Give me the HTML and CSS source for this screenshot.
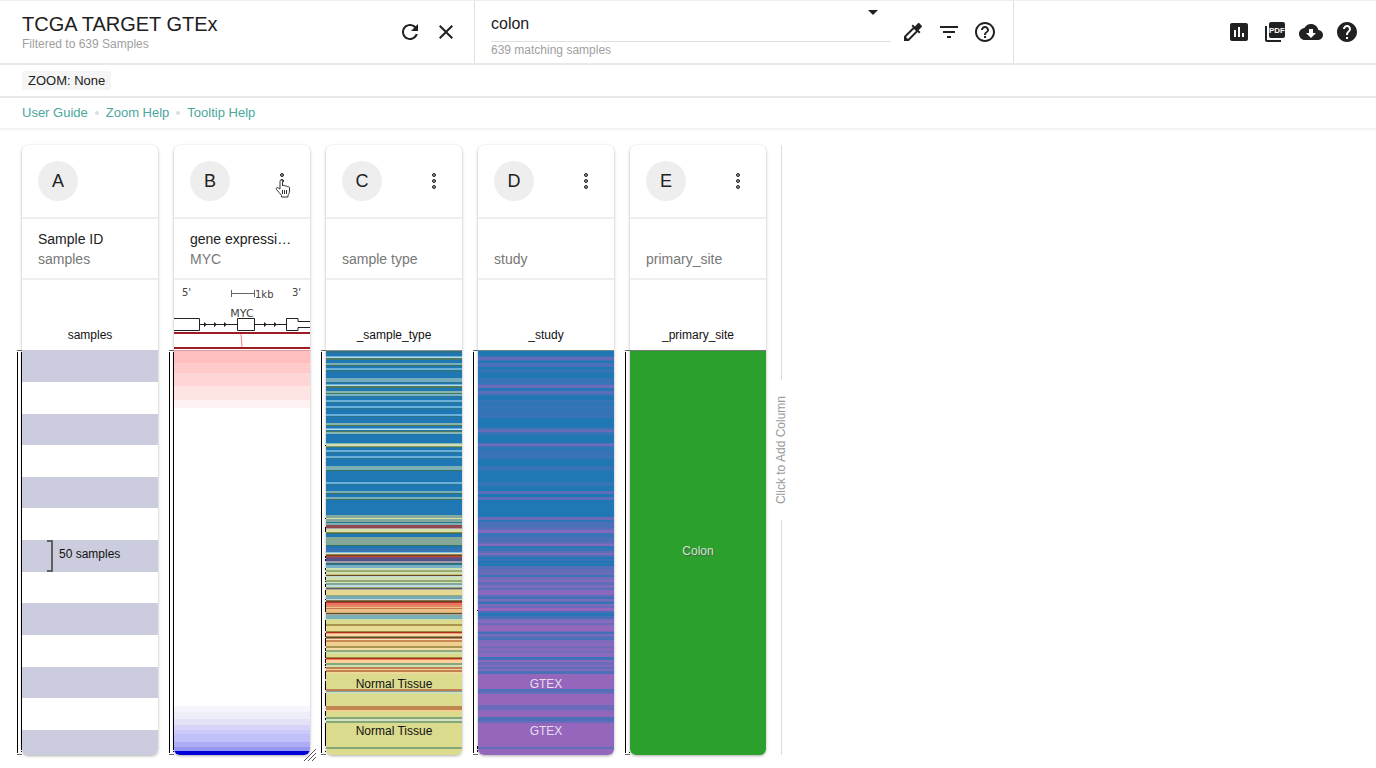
FILE: index.html
```html
<!DOCTYPE html>
<html lang="en">
<head>
<meta charset="utf-8">
<meta name="viewport" content="width=device-width, initial-scale=1">
<title>TCGA TARGET GTEx</title>
<link rel="stylesheet" href="styles.css">
</head>
<body>
<header class="topbar">
  <section class="cohort">
    <div class="cohort-text">
      <h1 class="cohort-name">TCGA TARGET GTEx</h1>
      <p class="caption">Filtered to 639 Samples</p>
    </div>
    <button class="icon-btn" aria-label="Reload cohort"><svg class="icon" viewBox="0 0 24 24"><path d="M17.65 6.35C16.2 4.9 14.21 4 12 4c-4.42 0-7.99 3.58-7.99 8s3.57 8 7.99 8c3.73 0 6.84-2.55 7.73-6h-2.08c-.82 2.33-3.04 4-5.65 4-3.31 0-6-2.69-6-6s2.69-6 6-6c1.66 0 3.14.69 4.22 1.78L13 11h7V4l-2.35 2.35z"/></svg></button>
    <button class="icon-btn" aria-label="Close cohort"><svg class="icon" viewBox="0 0 24 24"><path d="M19 6.41L17.59 5 12 10.59 6.41 5 5 6.41 10.59 12 5 17.59 6.41 19 12 13.41 17.59 19 19 17.59 13.41 12z"/></svg></button>
  </section>
  <section class="search">
    <div class="search-field">
      <input class="search-input" type="text" value="colon" aria-label="Find samples" aria-describedby="matches">
      <button class="search-history" aria-label="Search history"><svg class="caret" viewBox="0 0 10 5"><path d="M0 0h10L5 5z"/></svg></button>
      <p class="caption" id="matches">639 matching samples</p>
    </div>
    <button class="icon-btn" aria-label="Pick samples"><svg class="icon" viewBox="0 0 24 24"><path d="M20.71 5.63l-2.34-2.34c-.39-.39-1.02-.39-1.41 0l-3.12 3.12-1.93-1.91-1.41 1.41 1.42 1.42L3 16.25V21h4.75l8.92-8.92 1.42 1.42 1.41-1.41-1.92-1.92 3.12-3.12c.4-.4.4-1.03.01-1.42zM6.92 19L5 17.08l8.06-8.06 1.92 1.92L6.92 19z"/></svg></button>
    <button class="icon-btn" aria-label="Filter"><svg class="icon" viewBox="0 0 24 24"><path d="M10 18h4v-2h-4v2zM3 6v2h18V6H3zm3 7h12v-2H6v2z"/></svg></button>
    <button class="icon-btn" aria-label="Search help"><svg class="icon" viewBox="0 0 24 24"><path d="M11 18h2v-2h-2v2zm1-16C6.48 2 2 6.48 2 12s4.48 10 10 10 10-4.48 10-10S17.52 2 12 2zm0 18c-4.41 0-8-3.59-8-8s3.59-8 8-8 8 3.59 8 8-3.59 8-8 8zm0-14c-2.21 0-4 1.79-4 4h2c0-1.1.9-2 2-2s2 .9 2 2c0 2-3 1.75-3 5h2c0-2.25 3-2.5 3-5 0-2.21-1.79-4-4-4z"/></svg></button>
  </section>
  <nav class="tools" aria-label="Tools">
    <button class="icon-btn" aria-label="Charts"><svg class="icon" viewBox="0 0 24 24"><path d="M19 3H5c-1.1 0-2 .9-2 2v14c0 1.1.9 2 2 2h14c1.1 0 2-.9 2-2V5c0-1.1-.9-2-2-2zM9 17H7v-7h2v7zm4 0h-2V7h2v10zm4 0h-2v-4h2v4z"/></svg></button>
    <button class="icon-btn" aria-label="Download PDF"><svg class="icon" viewBox="0 0 24 24"><path d="M4 6H2v14c0 1.1.9 2 2 2h14v-2H4z"/><rect x="6" y="2" width="16" height="16" rx="2"/><text class="icon-label" x="14" y="13" text-anchor="middle">PDF</text></svg></button>
    <button class="icon-btn" aria-label="Download data"><svg class="icon" viewBox="0 0 24 24"><path d="M19.35 10.04C18.67 6.59 15.64 4 12 4 9.11 4 6.6 5.64 5.35 8.04 2.34 8.36 0 10.91 0 14c0 3.31 2.69 6 6 6h13c2.76 0 5-2.24 5-5 0-2.64-2.05-4.78-4.65-4.96zM17 13l-5 5-5-5h3V9h4v4h3z"/></svg></button>
    <button class="icon-btn" aria-label="Help"><svg class="icon" viewBox="0 0 24 24"><path d="M12 2C6.48 2 2 6.48 2 12s4.48 10 10 10 10-4.48 10-10S17.52 2 12 2zm1 17h-2v-2h2v2zm2.07-7.75l-.9.92C13.45 12.9 13 13.5 13 15h-2v-.5c0-1.1.45-2.1 1.17-2.83l1.24-1.26c.37-.36.59-.86.59-1.41 0-1.1-.9-2-2-2s-2 .9-2 2H8c0-2.21 1.79-4 4-4s4 1.79 4 4c0 .88-.36 1.68-.93 2.25z"/></svg></button>
  </nav>
</header>

<div class="zoombar"><span class="chip">ZOOM: None</span></div>

<nav class="links" aria-label="Guides">
  <a class="link" href="#guide">User Guide</a><span class="dot"></span>
  <a class="link" href="#zoom">Zoom Help</a><span class="dot"></span>
  <a class="link" href="#tooltip">Tooltip Help</a>
</nav>

<main class="columns">
  <article class="column">
    <div class="card-head"><span class="badge">A</span></div>
    <div class="card-title"><h2 class="name">Sample ID</h2><p class="sub">samples</p></div>
    <div class="annotation"><span class="field">samples</span></div>
    <div class="plot">
      <svg class="axis" viewBox="0 0 6 405" preserveAspectRatio="none" data-axis="full"></svg>
      <svg class="heat" viewBox="0 0 136 405" preserveAspectRatio="none" data-heat="samples"></svg>
      <span class="scale">50 samples</span>
    </div>
  </article>

  <article class="column">
    <div class="card-head"><span class="badge">B</span>
      <button class="menu" aria-label="Column B menu"><svg class="menu-icon" viewBox="0 0 24 24"><circle cx="12" cy="6" r="2"/><circle cx="12" cy="12" r="2"/><circle cx="12" cy="18" r="2"/></svg></button>
      <svg class="pointer" viewBox="0 0 16 20"><path d="M5 11V3.500c0-2 2.500-2 2.500 0V8c.5-1 2.200-1 2.500.3.700-.8 2-.6 2.300.5 1-.6 2.200 0 2.200 1.200V13c0 2-1 3-1.500 4.500V19H6.500v-1.500C5 16 3.500 13.500 1.500 11.500c-1-1.300.5-2.500 1.700-1.500z"/><path d="M7.500 12v4M9.500 12v4M11.500 12v4"/></svg>
    </div>
    <div class="card-title"><h2 class="name">gene expressi…</h2><p class="sub">MYC</p></div>
    <div class="annotation gene-model">
      <svg class="gene" viewBox="0 0 136 70" preserveAspectRatio="none">
        <g class="gene-text"><text x="8" y="16">5'</text><text x="81" y="18">1kb</text><text x="118" y="16">3'</text><text class="gene-name" x="68" y="37" text-anchor="middle">MYC</text></g>
        <path class="gene-scale" d="M57.500 10v7M57.500 13.500h23M80.500 10v7"/>
        <path class="gene-line" d="M0 38.500h25.500v12H0M25.500 44.500h38M63.500 38.500h17v12h-17zM80.500 44.500h32M136 41.500h-12v-3h-11.500v12H124v-3h12"/>
        <path class="gene-arrows" d="M30 42l3 2.500-3 2.500zM40 42l3 2.500-3 2.500zM50 42l3 2.500-3 2.500zM90 42l3 2.500-3 2.500zM100 42l3 2.500-3 2.500z"/>
        <path class="gene-range" d="M0 53h136M0 68h136"/>
        <path class="gene-link" d="M67 54l1 13"/>
      </svg>
    </div>
    <div class="plot">
      <svg class="axis" viewBox="0 0 6 405" preserveAspectRatio="none" data-axis="full"></svg>
      <svg class="heat" viewBox="0 0 136 405" preserveAspectRatio="none" data-heat="expression"></svg>
    </div>
    <svg class="resize" viewBox="0 0 12 12"><path d="M0 12L12 0M4 12l8-8M8 12l4-4"/></svg>
  </article>

  <article class="column">
    <div class="card-head"><span class="badge">C</span>
      <button class="menu" aria-label="Column C menu"><svg class="menu-icon" viewBox="0 0 24 24"><circle cx="12" cy="6" r="2"/><circle cx="12" cy="12" r="2"/><circle cx="12" cy="18" r="2"/></svg></button>
    </div>
    <div class="card-title"><p class="sub">sample type</p></div>
    <div class="annotation"><span class="field">_sample_type</span></div>
    <div class="plot">
      <svg class="axis" viewBox="0 0 6 405" preserveAspectRatio="none" data-axis="type"></svg>
      <svg class="heat" viewBox="0 0 136 405" preserveAspectRatio="none" data-heat="type"></svg>
      <span class="value upper dark">Normal Tissue</span>
      <span class="value lower dark">Normal Tissue</span>
    </div>
  </article>

  <article class="column">
    <div class="card-head"><span class="badge">D</span>
      <button class="menu" aria-label="Column D menu"><svg class="menu-icon" viewBox="0 0 24 24"><circle cx="12" cy="6" r="2"/><circle cx="12" cy="12" r="2"/><circle cx="12" cy="18" r="2"/></svg></button>
    </div>
    <div class="card-title"><p class="sub">study</p></div>
    <div class="annotation"><span class="field">_study</span></div>
    <div class="plot">
      <svg class="axis" viewBox="0 0 6 405" preserveAspectRatio="none" data-axis="study"></svg>
      <svg class="heat" viewBox="0 0 136 405" preserveAspectRatio="none" data-heat="study"></svg>
      <span class="value upper">GTEX</span>
      <span class="value lower">GTEX</span>
    </div>
  </article>

  <article class="column">
    <div class="card-head"><span class="badge">E</span>
      <button class="menu" aria-label="Column E menu"><svg class="menu-icon" viewBox="0 0 24 24"><circle cx="12" cy="6" r="2"/><circle cx="12" cy="12" r="2"/><circle cx="12" cy="18" r="2"/></svg></button>
    </div>
    <div class="card-title"><p class="sub">primary_site</p></div>
    <div class="annotation"><span class="field">_primary_site</span></div>
    <div class="plot">
      <svg class="axis" viewBox="0 0 6 405" preserveAspectRatio="none" data-axis="site"></svg>
      <svg class="heat" viewBox="0 0 136 405" preserveAspectRatio="none" data-heat="site"></svg>
      <span class="value middle">Colon</span>
    </div>
  </article>

  <button class="add-column"><span class="add-label">Click to Add Column</span></button>
</main>
<script src="heatmaps.js"></script>
</body>
</html>
```

FILE: styles.css
```css
*, *::before, *::after { box-sizing: border-box; }
body {
  margin: 0;
  min-height: 100vh;
  display: flex;
  flex-direction: column;
  background: #fff;
  color: #212121;
  font: 14px/20px "Liberation Sans", Arial, sans-serif;
}
h1, h2, p { margin: 0; font-weight: 400; }
button { margin: 0; padding: 0; border: 0; background: none; color: inherit; font: inherit; cursor: pointer; }

.topbar {
  display: grid;
  grid-template-columns: 475px 539px 1fr;
  min-height: 65px;
  border-top: 1px solid #eee;
  border-bottom: 2px solid #e9e9e9;
}
.cohort, .search, .tools { display: flex; align-items: center; padding-right: 10px; }
.cohort, .search { border-right: 1px solid #e0e0e0; }
.cohort { padding-left: 22px; }
.search { padding-left: 16px; }
.tools { justify-content: flex-end; padding-right: 11px; }
.cohort-text { flex: 1; min-width: 0; }
.cohort-name { font-size: 20px; line-height: 24px; }
.caption { font-size: 12px; line-height: 16px; color: #a0a0a0; }
.icon-btn { width: 36px; height: 36px; flex: none; display: grid; place-items: center; }
.icon { width: 24px; height: 24px; fill: #212121; }
.icon-label { fill: #fff; font: bold 8px "Liberation Sans", Arial, sans-serif; }
.search-field { position: relative; flex: 1; margin-right: 4px; padding-top: 4px; }
.search-input {
  display: block;
  width: 100%;
  height: 32px;
  padding: 0 24px 3px 0;
  border: 0;
  border-bottom: 1px solid #e0e0e0;
  outline: 0;
  background: none;
  color: #212121;
  font: 16px/24px "Liberation Sans", Arial, sans-serif;
}
.search-history { position: absolute; top: 0; right: 12px; width: 12px; height: 12px; display: grid; place-items: center; }
.caret { width: 10px; height: 5px; fill: #212121; }

.zoombar { display: flex; align-items: center; min-height: 33px; padding: 0 22px; border-bottom: 2px solid #e9e9e9; }
.chip { padding: 0 6px; border-radius: 2px; background: #f5f5f5; font-size: 13px; line-height: 19px; }

.links { display: flex; align-items: center; gap: 7px; min-height: 32px; padding: 0 22px; border-bottom: 2px solid #f3f3f3; font-size: 13px; }
.link { color: #4ba69c; text-decoration: none; }
.dot { width: 4px; height: 4px; border-radius: 50%; background: #ddd; }

.columns { flex: 1; display: flex; gap: 16px; padding: 15px 22px 13px; }
.column {
  position: relative;
  flex: none;
  width: 136px;
  display: flex;
  flex-direction: column;
  border-radius: 6px;
  background: #fff;
  box-shadow: 0 1px 3px rgba(0, 0, 0, 0.32);
}
.card-head { position: relative; display: flex; align-items: center; justify-content: space-between; height: 74px; padding: 0 16px; border-bottom: 2px solid #eee; }
.badge { width: 40px; height: 40px; border-radius: 50%; background: #eee; font-size: 18px; line-height: 40px; text-align: center; }
.menu { width: 24px; height: 24px; }
.menu-icon { display: block; width: 24px; height: 24px; fill: #999; stroke: #222; stroke-width: 1; }
.menu-icon circle { r: 1.5px; }
.pointer { position: absolute; left: 101px; top: 33px; width: 16px; height: 20px; fill: #fff; stroke: #333; stroke-width: 1; }
.card-title { display: flex; flex-direction: column; justify-content: flex-end; height: 61px; padding: 0 16px 9px; border-bottom: 2px solid #eee; }
.name { font-size: 14px; line-height: 20px; white-space: nowrap; }
.sub { color: #777; }
.annotation { display: flex; align-items: flex-end; justify-content: center; height: 70px; padding-bottom: 7px; }
.field { font-size: 12px; line-height: 16px; color: #111; }
.gene-model { padding: 0; }
.gene { width: 100%; height: 70px; fill: none; }
.gene-text { fill: #444; font: 10px "DejaVu Sans", sans-serif; }
.gene-name { font-size: 11px; }
.gene-scale { stroke: #666; }
.gene-line { stroke: #222; }
.gene-arrows { fill: #222; }
.gene-range { stroke: #a01c24; stroke-width: 2; }
.gene-link { stroke: #f08080; }
.plot { position: relative; flex: 1; min-height: 240px; font-size: 12px; line-height: 16px; }
.heat { position: absolute; inset: 0; width: 100%; height: 100%; border-radius: 0 0 6px 6px; shape-rendering: crispEdges; }
.axis { position: absolute; right: 100%; top: 0; width: 6px; height: 100%; shape-rendering: crispEdges; }
.value { position: absolute; left: 0; right: 0; text-align: center; color: #e6def0; transform: translateY(-50%); }
.dark { color: #111; }
.upper { top: 82.4%; }
.lower { top: 94%; }
.middle { top: 49.6%; color: #c8ecc8; text-shadow: 1px 1px 1px #555; }
.scale { position: absolute; top: 47%; left: 25px; height: 32px; padding-left: 12px; line-height: 29px; color: #111; }
.scale::before { content: ""; position: absolute; left: 0; top: 0; width: 6px; height: 32px; border: 2px solid #606060; border-left: 0; }
.resize { position: absolute; right: -6px; bottom: -6px; width: 12px; height: 12px; fill: none; stroke: #555; }

.add-column { display: flex; flex-direction: column; align-items: center; gap: 16px; width: 16px; margin-left: -9px; color: #999; }
.add-column::before, .add-column::after { content: ""; flex: 1; width: 1px; background: #ddd; }
.add-label { writing-mode: vertical-rl; transform: rotate(180deg); font-size: 12px; line-height: 16px; white-space: nowrap; }
```

FILE: heatmaps.js
```js
// Bands are "start:color" pairs; each one runs until the next start.
const heat = {
  samples: '0:#cbccde 32:#fff 64:#cbccde 95:#fff 127:#cbccde 158:#fff 190:#cbccde 222:#fff 253:#cbccde 285:#fff 317:#cbccde 348:#fff 380:#cbccde',
  expression: '0:#dba0a0 1:#ffbfbf 13:#ffcaca 23:#ffd6d6 36:#ffe4e4 50:#fff2f2 58:#fff 356:#f5f5fb 362:#eeeef9 369:#e3e2f6 375:#d8d4f9 380:#cccafa 384:#c0c0fb 392:#adadf6 397:#9797f2 401:#0000d8',
  type: '0:#8a9088 1:#2b7190 3:#1f77b4 6:#6bb0d8 7:#b4dbe6 8:#4a7a68 10:#1f77b4 13:#7ab0b5 15:#3a7060 16:#1f77b4 18:#6bb0d8 20:#2c7690 22:#1f77b4 28:#74abbd 32:#30748a 33:#1f77b4 34:#6bb0d8 35:#b9dde8 36:#4a7858 38:#1f77b4 41:#86b5ae 43:#4a7858 44:#74b0c8 46:#2c7690 47:#1f77b4 50:#6bb0d8 52:#2c7690 53:#1f77b4 56:#6bb0d8 58:#2c7690 59:#1f77b4 64:#6bb0d8 66:#2c7690 67:#1f77b4 73:#86b5ae 75:#4a7858 76:#1f77b4 78:#6bb0d8 79:#b9dde8 80:#1f77b4 81:#4a7858 82:#86b5ae 84:#1f77b4 93:#86b5ae 94:#cfe0b8 96:#8a9a60 97:#2c7690 98:#1f77b4 100:#6bb0d8 102:#2c7690 103:#1f77b4 106:#6bb0d8 108:#2c7690 109:#1f77b4 116:#7ab0b5 120:#3a7060 121:#1f77b4 132:#6bb0d8 134:#2c7690 135:#1f77b4 141:#7ab0b5 143:#3a7060 144:#1f77b4 147:#7ab0b5 149:#3a7060 150:#1f77b4 165:#84a89c 168:#d5e0b0 169:#84a89c 172:#2c7690 173:#7ab0b5 175:#8f4a50 178:#b0a0a8 179:#d8dfa8 182:#8a8a40 183:#3a7060 184:#1f77b4 187:#84a898 195:#3a7060 196:#1f77b4 198:#3575b4 202:#84c0e0 203:#e0e0c0 204:#8a8a50 205:#7b3a20 206:#c04a38 207:#6a5078 209:#51528a 211:#a09aa8 213:#2f7080 215:#78b0c8 218:#cfe0b5 220:#9aaa70 222:#cfe0b5 224:#d0b870 225:#604e28 226:#bcd8dc 227:#d5e0b0 230:#8fa878 232:#d5e0b0 233:#80a898 235:#c0dce0 237:#a5aa70 238:#506060 239:#b0a8a0 240:#e6d890 245:#94a880 246:#78a8b0 249:#c0dce0 250:#857050 251:#5f4a20 252:#b8342c 253:#ef7060 255:#de8a62 257:#f5c088 258:#c07850 259:#efbe82 262:#c8b080 263:#604e28 264:#b0a490 265:#78b0b8 269:#cbdcb0 270:#dbdb8d 274:#a99450 276:#e8dc92 281:#9a8a40 282:#a83020 283:#f0a070 284:#ffd8a8 286:#9a8a58 287:#5c5028 288:#ba8055 289:#ffe0c0 290:#c88a55 292:#f0d090 296:#a99450 298:#f2dca0 300:#94a880 302:#cfe0a8 304:#dbdb8d 307:#a08a40 308:#a83020 309:#f08058 310:#ffd0a0 313:#86a878 315:#cfe0b8 317:#c08050 319:#fbd09a 320:#c08050 322:#efd898 324:#dbdb8d 339:#c08050 341:#86a0a0 342:#cfe0b8 344:#dbdb8d 356:#c08550 360:#f0d090 362:#dbdb8d 367:#86a878 369:#d0e0c0 371:#86a878 373:#dbdb8d 397:#86a878 399:#dbdb8d',
  study: '0:#6a8a88 1:#1f77b4 6:#3a74b8 7:#646cb9 10:#3a74b8 11:#1f77b4 13:#4c70b8 17:#1f77b4 19:#3075b6 23:#1f77b4 28:#3674b7 34:#4870b8 35:#6a6cba 38:#2875b5 41:#5c6eb9 44:#3674b7 46:#1f77b4 50:#3674b7 53:#2a76b6 56:#3674b7 59:#2a76b6 60:#3674b7 68:#1f77b4 78:#4a70b8 80:#6a6cba 82:#3674b7 85:#1f77b4 93:#5470b8 94:#706bbb 96:#3674b7 98:#2a76b6 100:#3674b7 109:#1f77b4 116:#3674b7 121:#1f77b4 132:#3674b7 136:#1f77b4 141:#5a6eb9 144:#1f77b4 147:#5a6eb9 150:#1f77b4 167:#6a6cba 170:#2a76b6 172:#4a70b8 178:#5a6eb9 180:#806bbc 183:#3a74b8 187:#4c70b8 192:#646cb9 194:#866abc 196:#2a76b6 198:#3a74b8 201:#5a6eb9 203:#7a6bbb 205:#4c70b8 207:#2875b5 209:#3a74b8 211:#1f77b4 213:#3a74b8 214:#1f77b4 216:#5470b8 219:#646cb9 222:#6a6cba 225:#3a74b8 227:#746bbb 230:#846abc 232:#606eba 235:#7d6bbb 238:#5c6eb9 240:#8a69bd 245:#5a6eb9 247:#3a74b8 249:#7a6bbb 251:#5470b8 252:#3674b7 254:#7d6bbb 256:#686cba 258:#9467bd 261:#4870b8 263:#2875b5 266:#4870b8 269:#7a6bbb 271:#8b69bd 273:#686cba 275:#8b69bd 277:#9467bd 281:#706bbb 282:#4070b8 284:#7a6bbb 286:#5a6eb9 288:#4870b8 290:#7d6bbb 293:#8b69bd 296:#706bbb 298:#846abc 301:#746bbb 303:#8b69bd 307:#3f72b8 310:#8b69bd 312:#6a6cba 315:#806bbc 317:#606eba 319:#806bbc 321:#4c70b8 324:#9467bd 339:#5070b9 342:#686cba 344:#9467bd 355:#6a6cba 360:#8868bc 362:#9467bd 367:#4c70b8 371:#686cba 373:#9467bd 397:#606eba 399:#9467bd',
  site: '0:#707c70 1:#2ca02c'
};

// Tick runs beside the plots, "start:length".
const axis = {
  full: '2:398 401:1',
  type: '95:1 168:1 177:5 206:2 209:2 218:2 222:2 227:3 231:1 234:3 240:5 249:1 252:10 270:11 283:4 288:8 298:3 302:6 309:4 314:2 317:1 321:8 331:9 343:13 361:5 368:2 373:23 401:1',
  study: '260:1 396:3 400:2',
  site: '402:1'
};

function rect(svg, x, y, w, h, fill) {
  const r = document.createElementNS('http://www.w3.org/2000/svg', 'rect');
  Object.entries({ x, y, width: w, height: h, fill }).forEach(([k, v]) => r.setAttribute(k, v));
  svg.append(r);
}

document.querySelectorAll('[data-heat]').forEach(svg => {
  const bands = heat[svg.dataset.heat].split(' ').map(b => b.split(':'));
  bands.forEach(([y, color], i) => {
    const end = i + 1 < bands.length ? bands[i + 1][0] : 405;
    rect(svg, 0, y, 136, end - y, color);
  });
});

document.querySelectorAll('[data-axis]').forEach(svg => {
  rect(svg, 1, 0, 5, 1, '#666');
  rect(svg, 1, 404, 5, 1, '#666');
  rect(svg, 1, 2, 1, 401, '#000');
  axis[svg.dataset.axis].split(' ').forEach(t => {
    const [y, h] = t.split(':');
    rect(svg, 5, y, 1, h, '#000');
  });
});
```
